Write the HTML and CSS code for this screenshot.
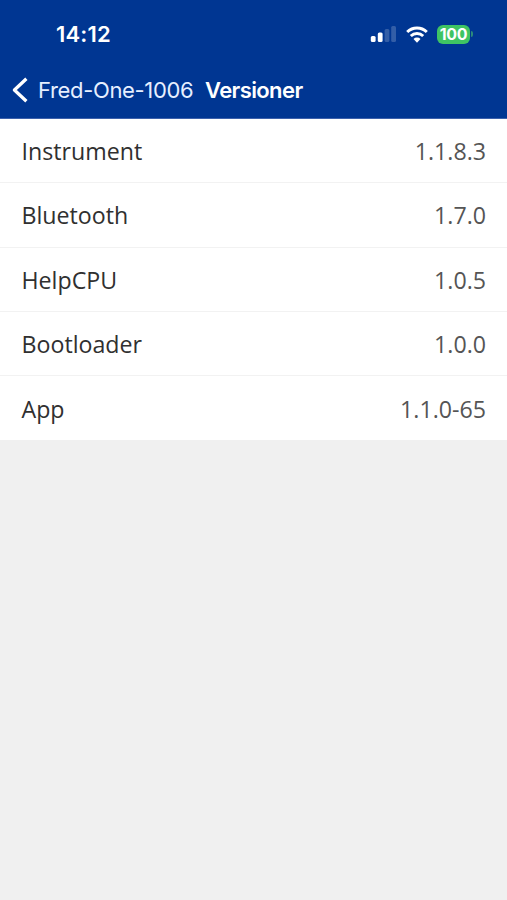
FILE: index.html
```html
<!DOCTYPE html>
<html lang="da">
<head>
<meta charset="utf-8">
<title>Versioner</title>
<link rel="stylesheet" href="styles.css">
</head>
<body>
<header class="header">
  <div class="status">
    <span class="time">14:12</span>
    <div class="indicators">
      <svg class="signal" width="26" height="16" viewBox="0 0 26 16"><rect x=".8" y="10" width="4.8" height="6" rx="1.5" fill="#fff"/><rect x="7.8" y="6.5" width="4.8" height="9.5" rx="1.5" fill="#fff"/><rect x="14.6" y="3" width="4.8" height="13" rx="1.5" fill="#fff" opacity=".2"/><rect x="21.2" y="0" width="4.8" height="16" rx="1.5" fill="#fff" opacity=".2"/></svg>
      <svg class="wifi" width="22" height="17" viewBox="0 0 22 17" fill="none" stroke="#fff" stroke-width="3"><path d="M1.2 6a14 14 0 0 1 19.6 0"/><path d="M4.8 10a9 9 0 0 1 12.4 0"/><path d="M11 16.8 7.5 13a4.9 4.9 0 0 1 7 0z" fill="#fff" stroke="none"/></svg>
      <span class="battery">100</span><i class="tip"></i>
    </div>
  </div>
  <nav class="nav">
    <svg class="back" width="16" height="26" viewBox="0 0 16 26" fill="none" stroke="#fff" stroke-width="3.3" stroke-linejoin="round"><path d="M14.4 1.8 2.4 13l12 11.2"/></svg>
    <span class="parent">Fred-One-1006</span>
    <h1 class="title">Versioner</h1>
  </nav>
</header>
<dl class="list">
  <div class="row"><dt>Instrument</dt><dd>1.1.8.3</dd></div>
  <div class="row"><dt>Bluetooth</dt><dd>1.7.0</dd></div>
  <div class="row"><dt>HelpCPU</dt><dd>1.0.5</dd></div>
  <div class="row"><dt>Bootloader</dt><dd>1.0.0</dd></div>
  <div class="row"><dt>App</dt><dd>1.1.0-65</dd></div>
</dl>
</body>
</html>
```
FILE: styles.css
```css
* { box-sizing: border-box; }
body { margin: 0; min-height: 900px; background: #f0f0f0; font-family: "Open Sans", sans-serif; }
.header { height: 119px; background: #003692; border-bottom: 1px solid #3c61ac; color: #fff; font-family: Inter, sans-serif; }
.status { height: 68px; padding: 0 34px 0 56px; display: flex; align-items: center; justify-content: space-between; }
.time { font-size: 22px; font-weight: 600; letter-spacing: .2px; }
.indicators { display: flex; align-items: center; }
.wifi { margin: 0 9px 0 10px; }
.battery { width: 33px; height: 19px; border-radius: 6px; background: #3fc463; font-size: 16px; line-height: 19px; font-weight: 700; letter-spacing: -.3px; text-align: center; }
.tip { width: 2px; height: 6px; margin-left: 1px; border-radius: 0 2px 2px 0; background: #2b8b7b; }
.nav { height: 44px; padding-left: 12px; display: flex; align-items: center; }
.back { margin-right: 10px; }
.parent { width: 167px; color: #e6efff; font-size: 22px; letter-spacing: -.35px; white-space: nowrap; }
.title { margin: 0; font-size: 22px; font-weight: 600; letter-spacing: -.6px; }
.list { margin: 0; background: #fff; color: #303030; font-size: 23.2px; }
.row { height: 64.3px; padding: 1px 21px 0 21.5px; display: flex; align-items: center; justify-content: space-between; border-bottom: 1px solid #f2f2f2; }
.row:last-child { border-bottom: 0; }
.row dd { margin: 0; color: #555; }
```
